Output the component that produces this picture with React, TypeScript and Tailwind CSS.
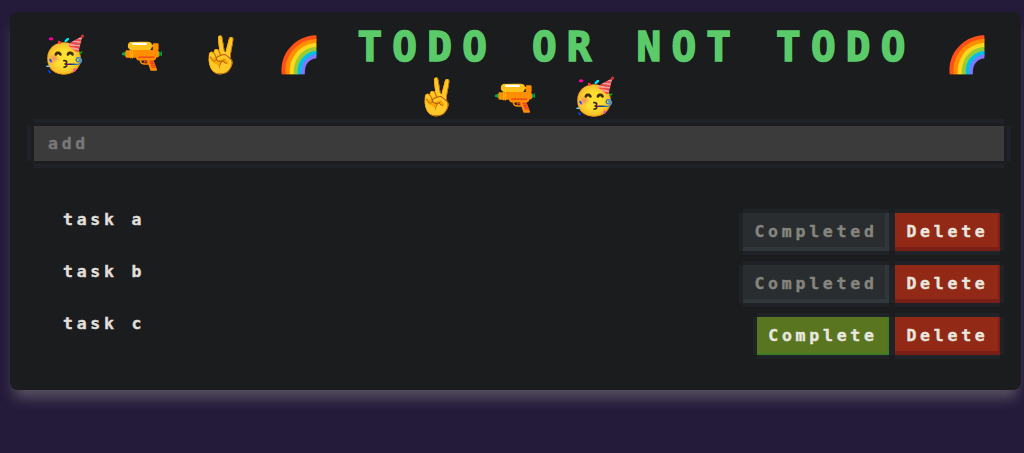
const TASKS = [
  { name: 'task a', done: true },
  { name: 'task b', done: true },
  { name: 'task c', done: false },
];

const BODY_TEXT = 'text-[16.5px] font-bold tracking-[3.75px] [-webkit-text-stroke:0.4px]';

function TaskRow({ name, done }: { name: string; done: boolean }) {
  return (
    <div className="flex h-[52px] items-start justify-between pl-[33px] pr-[1px]">
      <span className={`pt-[1px] leading-[26px] text-[#e0dfd9] ${BODY_TEXT}`}>{name}</span>
      <div className="flex gap-[6px] pt-[7px]">
        {done ? (
          <button className={`h-[38px] w-[146px] bg-[#2a2d2f] text-[#85857e] shadow-[inset_-4px_-4px_0_#31363a,0_-4px_0_#1f2327,0_4px_0_#1f2327,-4px_0_0_#1f2327,4px_0_0_#1f2327] ${BODY_TEXT}`}>
            Completed
          </button>
        ) : (
          <button className={`h-[38px] w-[132px] bg-[#5a751f] text-[#e8e8e0] shadow-[inset_-2px_-2px_0_#3e7d21,0_-4px_0_#1f2327,0_4px_0_#1f2327,-4px_0_0_#1f2327,4px_0_0_#1f2327] ${BODY_TEXT}`}>
            Complete
          </button>
        )}
        <button className={`h-[38px] w-[105px] bg-[#922916] text-[#e8e6df] shadow-[inset_-2px_-4px_0_#7a1f18,0_-4px_0_#1f2327,0_4px_0_#1f2327,-4px_0_0_#1f2327,4px_0_0_#1f2327] ${BODY_TEXT}`}>
          Delete
        </button>
      </div>
    </div>
  );
}

export default function App() {
  return (
    <div className="h-[453px] overflow-hidden bg-[#241a3a] pl-[10px] pr-[3px] pt-[12px] font-['DejaVu_Sans_Mono',monospace]">
      <div className="h-[378px] rounded-lg bg-[#1a1c1e] px-[20px] pt-[15px] shadow-[0_12px_14px_-4px_rgba(150,150,150,0.45)]">
        <h1 className="text-center text-[35.5px] font-bold leading-[42px] text-[#5bcb6a] [word-spacing:13px]">
          🥳 🔫 ✌️ 🌈{' '}
          <span className="ml-[2px] mr-[-5px] align-[6px] text-[41px] leading-none tracking-[10.2px] [word-spacing:0] [-webkit-text-stroke:1.6px]">TODO OR NOT TODO</span>{' '}
          🌈 ✌️ 🔫 🥳
        </h1>
        <input
          placeholder="add"
          className={`mx-[4px] mt-[8px] block h-[35px] w-[970px] bg-[#3b3b3b] px-[14px] shadow-[0_0_0_3px_#1b1d20,0_-7px_0_#1f2327,0_7px_0_#1f2327,-7px_0_0_#1f2327,7px_0_0_#1f2327] placeholder:text-[#77777a] ${BODY_TEXT}`}
        />
        <div className="mt-[45px]">
          {TASKS.map((t) => (
            <TaskRow key={t.name} name={t.name} done={t.done} />
          ))}
        </div>
      </div>
    </div>
  );
}
